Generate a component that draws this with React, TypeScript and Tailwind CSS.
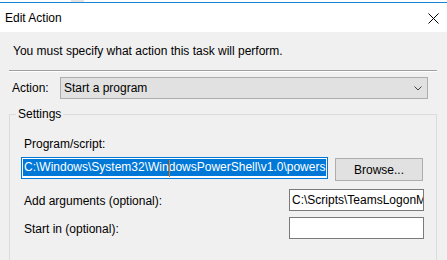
export default function App() {
  return (
    <div
      className="w-[447px] h-[260px] overflow-hidden bg-[#f0f0f0] text-[12px] leading-4 text-black"
      style={{ fontFamily: '"Liberation Sans", Arial, sans-serif' }}
    >
      <div className="h-[2px] bg-white relative">
        <div className="absolute left-[71px] top-0 w-[13px] h-[2px] bg-[#e3e3e3]" />
      </div>
      <div className="h-px bg-[#1883d7]" />
      <div className="h-[29px] bg-white flex items-center justify-between pl-[5px] pr-[8px]">
        <span>Edit Action</span>
        <svg width="11" height="11" viewBox="0 0 11 11" className="mt-[1px]">
          <path d="M0.5 0.5 L10.5 10.5 M10.5 0.5 L0.5 10.5" stroke="#000" strokeWidth="1" fill="none" />
        </svg>
      </div>
      <div className="pt-[11px] pl-[13px]">You must specify what action this task will perform.</div>
      <div className="mt-[11px] ml-[9px] w-[428px] h-0 border-t border-b border-t-[#a0a0a0] border-b-white" />
      <div className="mt-[5px] flex items-center">
        <span className="ml-[12px] w-[48px]">Action:</span>
        <div className="w-[368px] h-[22px] border border-[#adadad] bg-[#e1e1e1] flex items-center justify-between pl-[3px] pr-[5px]">
          <span>Start a program</span>
          <svg width="8" height="5" viewBox="0 0 8 5">
            <path d="M0.5 0.5 L4 4 L7.5 0.5" stroke="#444" strokeWidth="1" fill="none" />
          </svg>
        </div>
      </div>
      <div className="mt-[15px] ml-[9px] w-[428px] h-[200px] border border-[#dcdcdc] relative pt-[21px] pl-[11px] pr-[12px]">
        <span className="absolute left-[6px] top-[-9px] px-[2px] bg-[#f0f0f0]">Settings</span>
        <div className="ml-[3px]">Program/script:</div>
        <div className="mt-[5px] flex items-start">
          <div className="w-[307px] h-[22px] border border-[#0078d7] bg-white pl-[1px] pt-[1px] overflow-hidden whitespace-nowrap">
            <span className="bg-[#0078d7] text-white leading-[17px] inline-block pl-px pr-px">
              C:\Windows\System32\Win
              <span className="relative">
                <span className="absolute left-0 top-0 w-px h-[17px] bg-[#e07000]" />
              </span>
              dowsPowerShell\v1.0\powers
            </span>
          </div>
          <div className="ml-[7px] mt-[1px] w-[88px] h-[23px] border border-[#adadad] bg-[#e1e1e1] flex items-center justify-center">
            Browse...
          </div>
        </div>
        <div className="mt-[8px] flex items-center">
          <span className="ml-[3px] flex-1 pt-[1px]">Add arguments (optional):</span>
          <div className="w-[135px] h-[22px] border border-[#7a7a7a] bg-white pl-[2px] flex items-center overflow-hidden whitespace-nowrap">
            C:\Scripts\TeamsLogonM
          </div>
        </div>
        <div className="mt-[6px] flex items-center">
          <span className="ml-[3px] flex-1 pt-[1px]">Start in (optional):</span>
          <div className="w-[135px] h-[22px] border border-[#7a7a7a] bg-white" />
        </div>
      </div>
    </div>
  );
}
